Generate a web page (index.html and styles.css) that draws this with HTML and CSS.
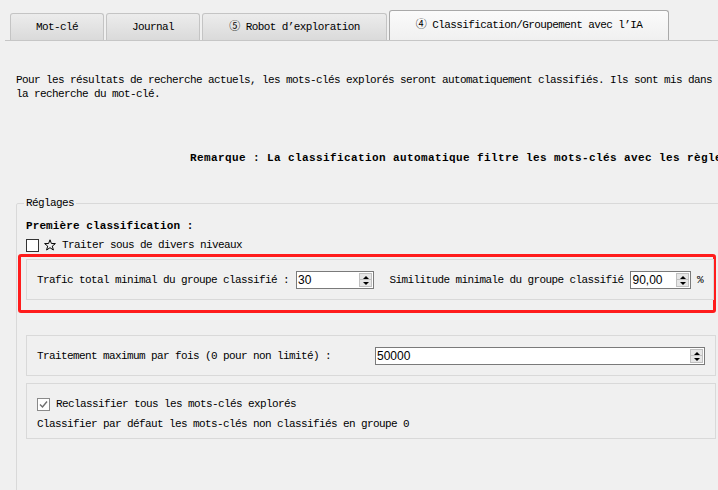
FILE: index.html
```html
<!DOCTYPE html>
<html lang="fr">
<head>
    <meta charset="UTF-8">
    <title>Classification/Groupement avec l'IA</title>
    <link rel="stylesheet" href="styles.css">
</head>
<body>
    <div class="tabs">
        <div class="tab tab-kw">Mot-clé</div>
        <div class="tab tab-log">Journal</div>
        <div class="tab tab-robot">⑤ Robot d’exploration</div>
        <div class="tab tab-ia active">④ Classification/Groupement avec l’IA</div>
    </div>

    <p class="intro">Pour les résultats de recherche actuels, les mots-clés explorés seront automatiquement classifiés. Ils sont mis dans<br>la recherche du mot-clé.</p>

    <p class="remark">Remarque : La classification automatique filtre les mots-clés avec les règles</p>

    <fieldset class="settings">
        <legend>Réglages</legend>
        <div class="section-title">Première classification :</div>
        <div class="check-row">
            <span class="checkbox"></span>
            <svg class="star" width="12" height="12" viewBox="0 0 12 12"><polygon points="6,0.8 7.4,4.5 11.4,4.6 8.3,7.1 9.4,11 6,8.7 2.6,11 3.7,7.1 0.6,4.6 4.6,4.5" fill="none" stroke="#000" stroke-width="1"/></svg>
            <span>Traiter sous de divers niveaux</span>
        </div>

        <!-- zone surlignée -->
        <div class="highlight">
            <div class="frame frame-min">
                <span class="lbl">Trafic total minimal du groupe classifié :</span>
                <div class="spin spin-traffic">
                    <span class="spin-value">30</span>
                    <span class="spin-btns"><span class="up"></span><span class="down"></span></span>
                </div>
                <span class="lbl lbl-sim">Similitude minimale du groupe classifié</span>
                <div class="spin spin-sim">
                    <span class="spin-value">90,00</span>
                    <span class="spin-btns"><span class="up"></span><span class="down"></span></span>
                </div>
                <span class="pct">%</span>
            </div>
        </div>

        <div class="frame frame-max">
            <span class="lbl lbl-max">Traitement maximum par fois (0 pour non limité) :</span>
            <div class="spin spin-max">
                <span class="spin-value">50000</span>
                <span class="spin-btns"><span class="up"></span><span class="down"></span></span>
            </div>
        </div>

        <div class="frame frame-reclass">
            <div class="check-row">
                <span class="checkbox checked">
                    <svg width="11" height="11" viewBox="0 0 11 11"><path d="M2 5.5 L4.5 8 L9 2.5" fill="none" stroke="#6e6e6e" stroke-width="1.4"/></svg>
                </span>
                <span>Reclassifier tous les mots-clés explorés</span>
            </div>
            <div class="plain-line">Classifier par défaut les mots-clés non classifiés en groupe 0</div>
        </div>
    </fieldset>
</body>
</html>
```

FILE: styles.css
```css
body {
    margin: 0;
    width: 718px;
    height: 490px;
    overflow: hidden;
    background: #f0f0f0;
    color: #000;
    font-family: "Liberation Mono", "DejaVu Sans Mono", "Noto Sans CJK SC", monospace;
    font-size: 11px;
    letter-spacing: -0.6px;
    line-height: 14px;
}

/* onglets */
.tabs {
    display: flex;
    align-items: flex-end;
    gap: 2px;
    height: 30px;
    margin: 10px 0 0 5px;
    padding-left: 5px;
    border-bottom: 1px solid #c6c6c6;
}
.tab {
    height: 26px;
    line-height: 26px;
    text-align: center;
    border: 1px solid #c4c4c4;
    border-bottom: none;
    border-radius: 3px 3px 0 0;
    background: linear-gradient(#ececec, #dadada);
    white-space: nowrap;
}
.tab-kw, .tab-log { width: 92px; }
.tab-robot { width: 183px; }
.tab-ia { width: 278px; }
.tab.active {
    height: 29px;
    line-height: 28px;
    border: 1px solid #a9a9a9;
    border-bottom: none;
    background: linear-gradient(#fbfbfb, #f0f0f0);
}

.intro {
    margin: 32px 0 0 16px;
}
.remark {
    margin: 50px 0 0 190px;
    font-weight: bold;
    letter-spacing: 0.4px;
    white-space: nowrap;
}

/* groupe Réglages */
.settings {
    width: 690px;
    margin: 31px 0 0 16px;
    padding: 0 9px 60px;
    border: 1px solid #d9d9d9;
    border-radius: 2px;
}
.settings legend {
    margin-left: -2px;
    padding: 0 2px;
}
.section-title {
    margin-top: 9px;
    font-weight: bold;
    letter-spacing: 0.1px;
}
.check-row {
    display: flex;
    align-items: center;
    height: 14px;
    margin-top: 5px;
}
.checkbox {
    width: 11px;
    height: 11px;
    margin-right: 5px;
    background: #fff;
    border: 1px solid #333;
}
.checkbox.checked {
    border-color: #8a8a8a;
}
.checkbox svg { display: block; }
.star {
    display: block;
    margin-right: 6px;
}

.highlight {
    width: 687px;
    margin: 2px 0 0 -8px;
    padding: 2px 0 10px 5px;
    border: 3px solid #ff1c1c;
    border-radius: 3px;
}

.frame {
    border: 1px solid #d9d9d9;
    padding: 0 10px;
}
.frame-min {
    display: flex;
    align-items: center;
    height: 39px;
    margin-right: -1px;
}
.frame-max {
    display: flex;
    align-items: center;
    height: 39px;
    margin-top: 22px;
}
.frame-reclass {
    height: 54px;
    margin-top: 7px;
}
.frame-reclass .check-row {
    margin-top: 13px;
}
.frame-reclass .checkbox { margin-right: 6px; }
.plain-line {
    margin-top: 6px;
}

.lbl { white-space: nowrap; }
.lbl-sim { margin-left: 15px; }
.lbl-max { width: 338px; }
.pct { margin-left: 6px; }

/* spinbox */
.spin {
    display: flex;
    height: 16px;
    background: #fff;
    border: 1px solid #7a7a7a;
    font-family: "Liberation Sans", Arial, sans-serif;
    font-size: 12px;
    letter-spacing: 0;
    line-height: 16px;
}
.spin-traffic { width: 77px; margin-left: 7px; }
.spin-sim { width: 59px; margin-left: 7px; }
.spin-max { flex: 1; }
.spin-value {
    flex: 1;
    padding-left: 1px;
}
.spin-btns {
    display: flex;
    flex-direction: column;
    width: 13px;
    margin: 1px 1px 1px 0;
    background: #e6e6e6;
    border: 1px solid #c0c0c0;
    box-sizing: border-box;
}
.spin-btns span {
    flex: 1;
    position: relative;
}
.spin-btns .up { border-bottom: 1px solid #c0c0c0; }
.spin-btns .up::after,
.spin-btns .down::after {
    content: "";
    position: absolute;
    left: 3px;
    border-left: 3px solid transparent;
    border-right: 3px solid transparent;
}
.spin-btns .up::after {
    top: 2px;
    border-bottom: 3px solid #000;
}
.spin-btns .down::after {
    top: 2px;
    border-top: 3px solid #000;
}
```
